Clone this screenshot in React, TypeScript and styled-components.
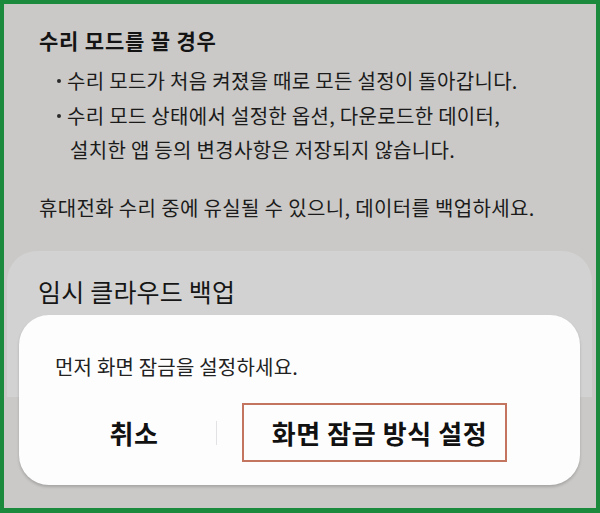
import React from 'react'
import styled, { createGlobalStyle } from 'styled-components'

const GlobalStyle = createGlobalStyle`
    html, body {
        margin: 0;
        padding: 0;
        background: #ffffff;
    }
    * {
        box-sizing: border-box;
    }
`

const font = `'Noto Sans CJK KR', 'Noto Sans', sans-serif`

const Frame = styled.div`
    position: relative;
    width: 600px;
    height: 513px;
    border: 4px solid #1b8a3c;
    border-bottom-width: 5px;
    background: #cac9c7;
    display: flex;
    flex-direction: column;
    overflow: hidden;
    font-family: ${font};
    color: #1b1b1b;
`

const Notice = styled.section`
    padding: 22px 0 0 35px;
`

const Heading = styled.h2`
    margin: 0;
    font-size: 21px;
    font-weight: 700;
    line-height: 28px;
    letter-spacing: 0.8px;
    color: #141414;
`

const BulletList = styled.ul`
    list-style: none;
    margin: 10px 0 0;
    padding: 0;
    display: flex;
    flex-direction: column;
    gap: 1px;
`

const Bullet = styled.li`
    position: relative;
    padding-left: 31px;
    text-indent: -3px;
    font-size: 20px;
    line-height: 34px;
    letter-spacing: 0.3px;

    &::before {
        content: '';
        position: absolute;
        left: 18px;
        top: 15px;
        width: 4px;
        height: 4px;
        border-radius: 50%;
        background: #2a2a2a;
    }
`

const Paragraph = styled.p`
    margin: 24px 0 0;
    font-size: 20px;
    line-height: 34px;
    letter-spacing: 0.35px;
`

const Sheet = styled.section`
    margin: 26px 4px 0 3px;
    height: 146px;
    background: #d2d2d2;
    border-radius: 30px 30px 0 0;
    padding: 24px 0 0 31px;
`

const SheetTitle = styled.h3`
    margin: 0;
    font-size: 25px;
    font-weight: 400;
    line-height: 32px;
    letter-spacing: 0.2px;
    color: #161616;
`

const Dialog = styled.div`
    position: absolute;
    left: 15px;
    top: 311px;
    width: 561px;
    height: 170px;
    background: #fdfdfe;
    border-radius: 30px;
    box-shadow: 0 2px 3px rgba(0, 0, 0, 0.18);
    display: flex;
    flex-direction: column;
`

const Message = styled.p`
    margin: 38px 0 0 36px;
    font-size: 20px;
    line-height: 28px;
    letter-spacing: 0.2px;
    color: #222222;
`

const ButtonRow = styled.div`
    display: flex;
    align-items: center;
    margin-top: 22px;
    padding-left: 50px;
`

const DialogButton = styled.button<{ $outlined?: boolean }>`
    font-family: ${font};
    font-size: 26px;
    font-weight: 700;
    color: #111111;
    letter-spacing: 0.6px;
    background: transparent;
    cursor: pointer;
    display: flex;
    align-items: center;
    justify-content: center;
    padding: 0 0 0 ${(p) => (p.$outlined ? '10px' : '0')};
    width: ${(p) => (p.$outlined ? '265px' : '130px')};
    height: 59px;
    border: ${(p) => (p.$outlined ? '2px solid #c47560' : 'none')};
    margin-left: ${(p) => (p.$outlined ? '25px' : '0')};
`

const Divider = styled.span`
    width: 1px;
    height: 24px;
    margin-left: 17px;
    background: #e2e2e4;
`

const App = () => {
    return (
        <Frame>
            <GlobalStyle />
            <Notice>
                <Heading>수리 모드를 끌 경우</Heading>
                <BulletList>
                    <Bullet>수리 모드가 처음 켜졌을 때로 모든 설정이 돌아갑니다.</Bullet>
                    <Bullet>
                        수리 모드 상태에서 설정한 옵션, 다운로드한 데이터,
                        <br />
                        설치한 앱 등의 변경사항은 저장되지 않습니다.
                    </Bullet>
                </BulletList>
                <Paragraph>휴대전화 수리 중에 유실될 수 있으니, 데이터를 백업하세요.</Paragraph>
            </Notice>
            <Sheet>
                <SheetTitle>임시 클라우드 백업</SheetTitle>
            </Sheet>
            <Dialog>
                <Message>먼저 화면 잠금을 설정하세요.</Message>
                <ButtonRow>
                    <DialogButton>취소</DialogButton>
                    <Divider />
                    <DialogButton $outlined>화면 잠금 방식 설정</DialogButton>
                </ButtonRow>
            </Dialog>
        </Frame>
    )
}

export default App
